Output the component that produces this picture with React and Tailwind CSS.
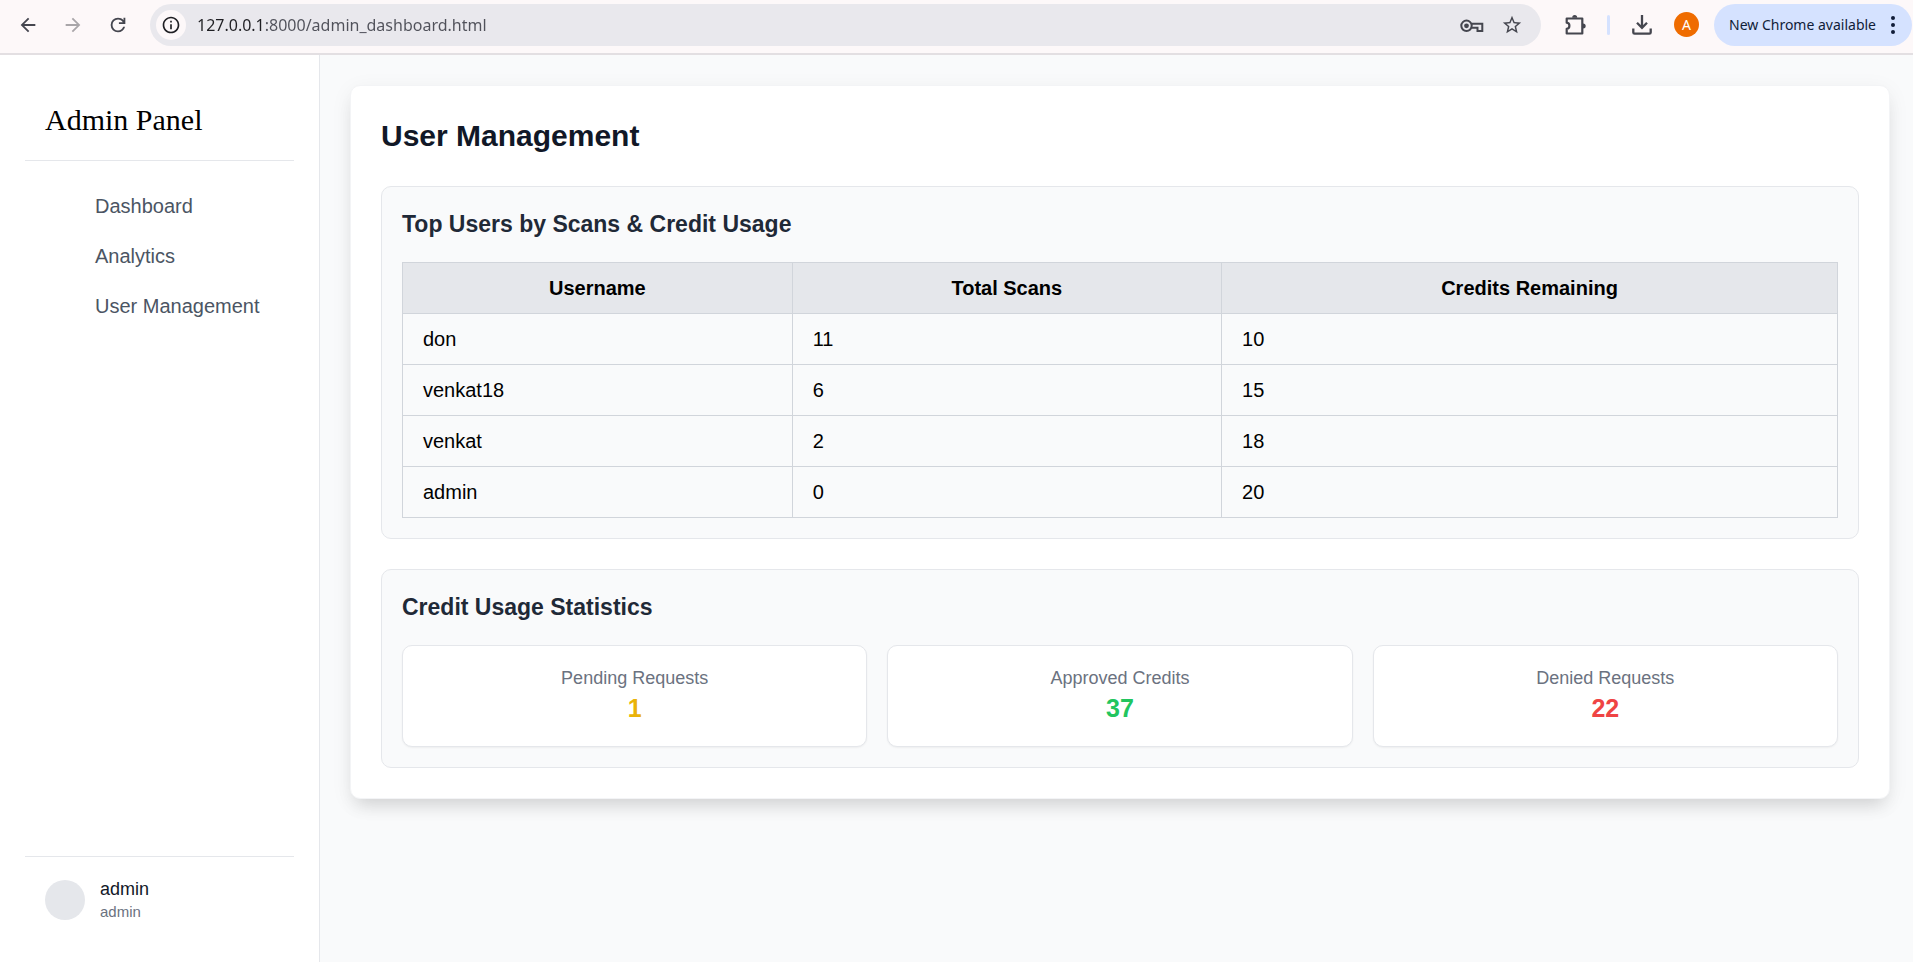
const NAV = ['Dashboard', 'Analytics', 'User Management'];

const USERS = [
  { name: 'don', scans: 11, credits: 10 },
  { name: 'venkat18', scans: 6, credits: 15 },
  { name: 'venkat', scans: 2, credits: 18 },
  { name: 'admin', scans: 0, credits: 20 },
];

const STATS = [
  { label: 'Pending Requests', value: 1, color: 'text-[#eab308]' },
  { label: 'Approved Credits', value: 37, color: 'text-[#22c55e]' },
  { label: 'Denied Requests', value: 22, color: 'text-[#ef4444]' },
];

function Icon({ path, className }) {
  return (
    <svg viewBox="0 0 24 24" fill="currentColor" className={className} aria-hidden="true">
      <path d={path} />
    </svg>
  );
}

const ICONS = {
  back: 'M20 11H7.83l5.59-5.59L12 4l-8 8 8 8 1.41-1.41L7.83 13H20v-2z',
  forward: 'M12 4l-1.41 1.41L16.17 11H4v2h12.17l-5.58 5.59L12 20l8-8z',
  reload:
    'M12 20q-3.35 0-5.675-2.325T4 12t2.325-5.675T12 4q1.725 0 3.3.7125T18 6.75V4h2v7h-7V9h4.2q-.8-1.4-2.1875-2.2T12 6Q9.5 6 7.75 7.75T6 12t1.75 4.25T12 18q1.925 0 3.475-1.1T17.65 14h2.1q-.7 2.65-2.85 4.325T12 20Z',
  info: 'M11 7h2v2h-2zm0 4h2v6h-2zm1-9C6.48 2 2 6.48 2 12s4.48 10 10 10 10-4.48 10-10S17.52 2 12 2zm0 18c-4.41 0-8-3.59-8-8s3.59-8 8-8 8 3.59 8 8-3.59 8-8 8z',
  star: 'M22 9.24l-7.19-.62L12 2 9.19 8.63 2 9.24l5.46 4.73L5.82 21 12 17.27 18.18 21l-1.63-7.03L22 9.24zM12 15.4l-3.76 2.27 1-4.28-3.32-2.88 4.38-.38L12 6.1l1.71 4.04 4.38.38-3.32 2.88 1 4.28L12 15.4z',
};

function ToolButton({ label, className, children }) {
  return (
    <button type="button" aria-label={label} className={`flex shrink-0 items-center justify-center ${className}`}>
      {children}
    </button>
  );
}

function BrowserBar() {
  return (
    <header className="flex h-[55px] shrink-0 items-center border-b-2 border-[#e3dfe2] bg-[#fdf8f9] pr-px pb-1 pl-4 font-['Noto_Sans',sans-serif] text-[#45464f]">
      <div className="flex items-center gap-[21px]">
        <ToolButton label="Back" className="size-6">
          <Icon path={ICONS.back} className="size-[22px]" />
        </ToolButton>
        <ToolButton label="Forward" className="size-6 text-[#a9a6a9]">
          <Icon path={ICONS.forward} className="size-[22px]" />
        </ToolButton>
        <ToolButton label="Reload" className="size-6">
          <Icon path={ICONS.reload} className="size-[22px]" />
        </ToolButton>
      </div>
      <div className="ml-5 flex h-[42px] min-w-0 flex-1 items-center rounded-full bg-[#e9e8ed] pr-[17px] pl-1.5">
        <ToolButton label="Site information" className="size-[30px] rounded-full bg-[#fdf8f9] text-[#1f1f23]">
          <Icon path={ICONS.info} className="size-5" />
        </ToolButton>
        <input
          type="text"
          aria-label="Address"
          defaultValue="127.0.0.1:8000/admin_dashboard.html"
          className="ml-[11px] min-w-0 flex-1 bg-[linear-gradient(90deg,#1f1f23_68px,#50515a_68px)] bg-clip-text text-[16px] leading-6 text-transparent outline-none"
        />
        <ToolButton label="Passwords" className="size-6">
          <svg viewBox="0 0 24 24" fill="none" stroke="currentColor" strokeWidth="2" className="size-6" aria-hidden="true">
            <circle cx="6.500" cy="12.800" r="5.200" />
            <circle cx="6.500" cy="12.800" r="2.400" fill="currentColor" stroke="none" />
            <path d="M11 10.700h11.300v7.300h-4.800v-3.300H11.300" />
          </svg>
        </ToolButton>
        <ToolButton label="Bookmark" className="ml-4 size-6">
          <Icon path={ICONS.star} className="size-[22px]" />
        </ToolButton>
      </div>
      <ToolButton label="Extensions" className="ml-[22px] size-6">
        <svg viewBox="0 0 24 24" className="size-6" aria-hidden="true">
          <path
            d="M3.700 5.500h15.600v15H3.700v-4.600c3.600-.5 3.600-5.700 0-6.200z"
            fill="none"
            stroke="currentColor"
            strokeWidth="2.2"
            strokeLinejoin="round"
          />
          <path d="M9.200 4.700a2.500 2.700 0 0 1 5 0zM20 10.500a2.700 2.500 0 0 1 0 5z" fill="currentColor" />
        </svg>
      </ToolButton>
      <div className="ml-5 h-5 w-[3px] rounded-full bg-[#d5e2ff]" />
      <ToolButton label="Downloads" className="ml-5 size-6">
        <svg viewBox="0 0 24 24" fill="none" stroke="currentColor" strokeWidth="2.3" className="size-6" aria-hidden="true">
          <path d="M12 2v13M7 9.800l5 5 5-5" />
          <path d="M3.300 15.500v3.900q0 1.300 1.300 1.300h14.800q1.300 0 1.300-1.300v-3.900" />
        </svg>
      </ToolButton>
      <ToolButton label="Profile" className="ml-5 size-[25px] rounded-full bg-[#ef6c00] text-sm text-white">
        A
      </ToolButton>
      <button
        type="button"
        className="ml-[15px] flex h-[42px] w-[198px] shrink-0 items-center justify-between rounded-full bg-[#d5e2ff] pr-[9px] pl-[15px] text-sm whitespace-nowrap text-[#101c38]"
      >
        New Chrome available
        <svg viewBox="0 0 20 20" fill="currentColor" className="size-5" aria-hidden="true">
          <circle cx="10" cy="3" r="2" />
          <circle cx="10" cy="10" r="2" />
          <circle cx="10" cy="17" r="2" />
        </svg>
      </button>
    </header>
  );
}

function Sidebar() {
  return (
    <aside className="flex w-80 shrink-0 flex-col border-r border-[#e5e7eb] bg-white px-[25px] pt-[25px] pb-5">
      <div className="border-b border-[#e5e7eb] p-5 font-['Liberation_Serif',serif] text-[30px] leading-10 text-black">
        Admin Panel
      </div>
      <nav className="mt-5 pl-[50px]">
        <ul>
          {NAV.map((item) => (
            <li key={item}>
              <a href="#" className="block py-2.5 pl-5 text-[20px] leading-[30px] whitespace-nowrap text-[#4b5563]">
                {item}
              </a>
            </li>
          ))}
        </ul>
      </nav>
      <div className="mt-auto flex items-center gap-[15px] border-t border-[#e5e7eb] p-5">
        <div className="size-10 rounded-full bg-[#e5e7eb]" />
        <div>
          <p className="text-[18px] leading-[25px] text-[#111827]">admin</p>
          <p className="text-[15px] leading-5 text-[#6b7280]">admin</p>
        </div>
      </div>
    </aside>
  );
}

function Section({ title, children }) {
  return (
    <section className="mt-[30px] rounded-[10px] border border-[#e5e7eb] bg-[#f9fafb] p-5">
      <h2 className="mb-5 text-[23px] leading-[35px] font-bold text-[#1f2937]">{title}</h2>
      {children}
    </section>
  );
}

export default function App() {
  return (
    <div className="flex min-h-screen flex-col font-['Liberation_Sans',Arial,sans-serif]">
      <BrowserBar />
      <div className="flex flex-1">
        <Sidebar />
        <main className="min-w-0 flex-1 bg-[#f9fafb] py-[30px] pr-[23px] pl-[30px]">
          <div className="rounded-[10px] border border-[#f3f4f6] bg-white p-[30px] shadow-[0_5px_22px_rgba(0,0,0,0.06),0_12px_18px_-6px_rgba(0,0,0,0.12)]">
            <h1 className="text-[30px] leading-10 font-bold text-[#111827]">User Management</h1>
            <Section title="Top Users by Scans & Credit Usage">
              <table className="w-full border-collapse text-[20px] leading-[30px] text-black">
                <thead>
                  <tr className="bg-[#e5e7eb]">
                    {['Username', 'Total Scans', 'Credits Remaining'].map((h) => (
                      <th key={h} className="border border-[#d1d5db] px-5 py-2.5 text-center font-bold">
                        {h}
                      </th>
                    ))}
                  </tr>
                </thead>
                <tbody>
                  {USERS.map((u) => (
                    <tr key={u.name}>
                      <td className="border border-[#d1d5db] px-5 py-2.5">{u.name}</td>
                      <td className="border border-[#d1d5db] px-5 py-2.5">{u.scans}</td>
                      <td className="border border-[#d1d5db] px-5 py-2.5">{u.credits}</td>
                    </tr>
                  ))}
                </tbody>
              </table>
            </Section>
            <Section title="Credit Usage Statistics">
              <div className="grid grid-cols-3 gap-5">
                {STATS.map((s) => (
                  <div key={s.label} className="rounded-[10px] border border-[#e5e7eb] bg-white p-5 text-center shadow-xs">
                    <p className="text-[18px] leading-[25px] text-[#6b7280]">{s.label}</p>
                    <p className={`text-[25px] leading-[35px] font-bold ${s.color}`}>{s.value}</p>
                  </div>
                ))}
              </div>
            </Section>
          </div>
        </main>
      </div>
    </div>
  );
}
